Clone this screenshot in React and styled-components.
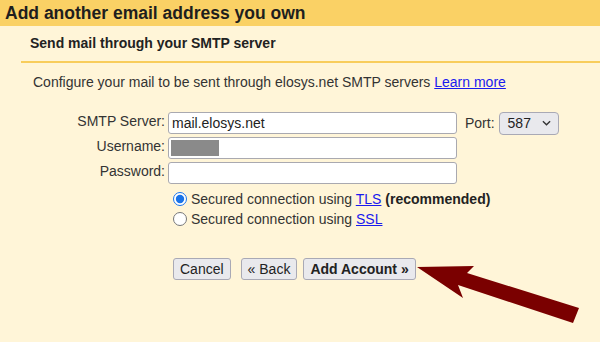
import React from "react";
import styled, { createGlobalStyle } from "styled-components";

const Global = createGlobalStyle`
  html, body {
    margin: 0;
    padding: 0;
    background: #fff5d8;
  }
  body {
    font-family: "Liberation Sans", Arial, sans-serif;
    color: #222;
  }
`;

export default function App() {
  return (
    <Page>
      <Global />
      <TitleBar>Add another email address you own</TitleBar>
      <Section>
        <SectionHead>Send mail through your SMTP server</SectionHead>
        <Intro>
          Configure your mail to be sent through elosys.net SMTP servers{" "}
          <Link href="#">Learn more</Link>
        </Intro>
        <Form>
          <Row>
            <Label>SMTP Server:</Label>
            <TextInput defaultValue="mail.elosys.net" />
            <PortLabel>Port:</PortLabel>
            <PortSelect>
              587
              <Chevron viewBox="0 0 10 6">
                <path d="M1 1l4 4 4-4" fill="none" stroke="#333" strokeWidth="1.5" />
              </Chevron>
            </PortSelect>
          </Row>
          <Row>
            <Label>Username:</Label>
            <FieldBox>
              <Redacted />
            </FieldBox>
          </Row>
          <Row>
            <Label>Password:</Label>
            <TextInput type="password" />
          </Row>
        </Form>
        <Radios>
          <RadioRow>
            <Radio type="radio" name="sec" defaultChecked />
            <span>
              Secured connection using <Link href="#">TLS</Link> <b>(recommended)</b>
            </span>
          </RadioRow>
          <RadioRow>
            <Radio type="radio" name="sec" />
            <span>
              Secured connection using <Link href="#">SSL</Link>
            </span>
          </RadioRow>
        </Radios>
        <Buttons>
          <Button $gap={10}>Cancel</Button>
          <Button $gap={6}>« Back</Button>
          <Button $bold>Add Account »</Button>
        </Buttons>
      </Section>
      <Arrow viewBox="0 0 600 342">
        <polygon
          points="417,267 474,266 467,273 579,308 573,323 458,285 463,298"
          fill="#7a0000"
        />
      </Arrow>
    </Page>
  );
}

const Page = styled.div`
  position: relative;
  width: 600px;
  height: 342px;
  overflow: hidden;
  background: #fff5d8;
`;

const TitleBar = styled.div`
  height: 26px;
  line-height: 26px;
  background: #fad165;
  padding-left: 5px;
  font-size: 17.5px;
  font-weight: bold;
  color: #1e1e1e;
`;

const Section = styled.div`
  margin-left: 21px;
`;

const SectionHead = styled.div`
  height: 35px;
  line-height: 35px;
  padding-left: 9px;
  font-size: 14px;
  font-weight: bold;
  color: #222;
  border-bottom: 2px solid #f8cd5c;
`;

const Intro = styled.div`
  margin-top: 11px;
  padding-left: 12px;
  line-height: 16px;
  font-size: 14px;
  color: #333;
`;

const Link = styled.a`
  color: #1a1aee;
  text-decoration: underline;
`;

const Form = styled.div`
  margin-top: 22px;
  display: flex;
  flex-direction: column;
  gap: 3px;
`;

const Row = styled.div`
  display: flex;
  align-items: center;
  height: 22px;
`;

const Label = styled.div`
  align-self: flex-start;
  padding-top: 1px;
  line-height: 16px;
  width: 144px;
  text-align: right;
  font-size: 14px;
  color: #333;
  margin-right: 3px;
`;

const TextInput = styled.input`
  box-sizing: border-box;
  width: 289px;
  height: 22px;
  border: 1px solid #a9a9b0;
  border-radius: 3px;
  background: #fff;
  padding: 0 3px;
  font: 14px "Liberation Sans", Arial, sans-serif;
  color: #222;
  outline: none;
`;

const FieldBox = styled.div`
  box-sizing: border-box;
  width: 289px;
  height: 22px;
  border: 1px solid #a9a9b0;
  border-radius: 3px;
  background: #fff;
  padding: 2px;
  display: flex;
  align-items: center;
`;

const Redacted = styled.div`
  width: 48px;
  height: 16px;
  background: #8a8a8a;
`;

const PortLabel = styled.div`
  margin-left: 8px;
  margin-right: 4px;
  font-size: 14px;
  color: #333;
`;

const PortSelect = styled.div`
  box-sizing: border-box;
  width: 60px;
  height: 23px;
  display: flex;
  align-items: center;
  justify-content: space-between;
  padding: 0 7px 0 8px;
  border: 1px solid #a9a9b5;
  border-radius: 4px;
  background: #e9e9ed;
  font-size: 14px;
  color: #222;
`;

const Chevron = styled.svg`
  width: 9px;
  height: 6px;
`;

const Radios = styled.div`
  margin-top: 5px;
  margin-left: 152px;
  display: flex;
  flex-direction: column;
`;

const RadioRow = styled.label`
  display: flex;
  align-items: center;
  height: 20px;
  font-size: 14px;
  color: #333;
  b {
    color: #222;
  }
`;

const Radio = styled.input`
  width: 14px;
  height: 14px;
  margin: 0 4px 0 0;
  accent-color: #1a73e8;
`;

const Buttons = styled.div`
  margin-top: 29px;
  margin-left: 152px;
  display: flex;
`;

const Button = styled.button`
  box-sizing: border-box;
  height: 22px;
  padding: 0 6px;
  margin-right: ${(p) => p.$gap || 0}px;
  border: 1px solid #a9a9b5;
  border-radius: 3px;
  background: #e9e9ed;
  font: ${(p) => (p.$bold ? "bold" : "normal")} 14px "Liberation Sans", Arial, sans-serif;
  color: #222;
`;

const Arrow = styled.svg`
  position: absolute;
  left: 0;
  top: 0;
  width: 600px;
  height: 342px;
  pointer-events: none;
`;
